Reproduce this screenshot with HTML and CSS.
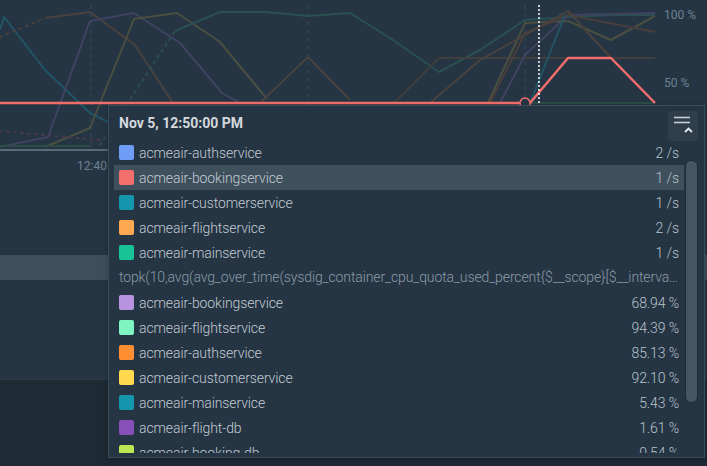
FILE: index.html
```html
<!DOCTYPE html>
<html>
<head>
<meta charset="utf-8">
<link rel="stylesheet" href="styles.css">
</head>
<body>
<div class="page">
  <svg class="chart" width="707" height="152" viewBox="0 0 707 152">
    <g class="grid">
      <line x1="91" y1="5" x2="91" y2="150"/>
      <line x1="308" y1="5" x2="308" y2="150"/>
      <line x1="525" y1="5" x2="525" y2="150"/>
    </g>
    <g class="series" fill="none" stroke-width="2" stroke-linejoin="round">
      <polyline stroke="#1f6678" points="0,30 4,17 45,70 90,113 108,122"/>
      <polyline stroke="#5e4a3c" stroke-dasharray="2 5" stroke-linecap="round" points="0,37 45,18"/>
      <polyline stroke="#5e4a3c" points="45,18 90,12 135,45 173,103"/>
      <polyline stroke="#4f4a72" points="0,147 48,137 90,21 134,13 180,43 222,93 240,103"/>
      <polyline stroke="#5f5d3e" points="45,147 90,128 134,19 177,13 220,42 267,99"/>
      <polyline stroke="#5a4c3f" points="260,103 308,57 350,100"/>
      <polyline stroke="#2e5f58" stroke-dasharray="2 5" stroke-linecap="round" points="100,145 175,31"/>
      <polyline stroke="#2e5f58" points="175,31 220,12 265,12 308,16 350,13 393,40 439,72 480,50 525,20 569,17 611,15 655,15"/>
      <polyline stroke="#5a3c55" stroke-dasharray="2 5" stroke-linecap="round" points="0,131 100,140"/>
      <polyline stroke="#2f5a46" points="0,146 91,146"/>
      <polyline stroke="#4f4538" points="394,103 439,58 655,58"/>
      <polyline stroke="#4f4a72" points="500,103 525,55 568,15 655,13"/>
      <polyline stroke="#5f5d3e" points="488,103 525,23 568,21 611,40 655,16"/>
      <polyline stroke="#5a4438" points="490,103 525,33 568,15 655,32"/>
      <polyline stroke="#1f6678" points="530,103 565,15"/>
      <polyline stroke="#5e4a3c" points="430,103 480,60 568,11 611,58"/>
      <polyline stroke="#2f5a46" points="530,103 655,103"/>
    </g>
    <line class="baseline" x1="0" y1="150" x2="660" y2="150"/>
    <polyline class="red" points="0,103 520,103"/>
    <polyline class="red" points="530,103 568,58 611,58 655,103"/>
    <circle class="marker" cx="525" cy="103" r="5"/>
    <line class="cursor" x1="539" y1="5" x2="539" y2="103"/>
    <text class="ylabel" x="664" y="19">100 %</text>
    <text class="ylabel" x="664" y="87">50 %</text>
  </svg>
  <div class="xaxis"><span class="xlabel">12:40</span></div>
  <div class="spacer"></div>
  <div class="band"></div>
  <div class="lower"></div>
  <div class="footer"></div>

  <div class="tooltip">
    <div class="tt-head">
      <span class="tt-title">Nov 5, 12:50:00 PM</span>
      <button class="tt-btn" type="button">
        <svg width="30" height="30" viewBox="0 0 30 30">
          <line x1="6" y1="6.5" x2="22" y2="6.5" stroke="#c9d1d7" stroke-width="1.6"/>
          <line x1="6" y1="11.5" x2="22" y2="11.5" stroke="#c9d1d7" stroke-width="1.6"/>
          <polyline points="17,21 20.5,17.5 24,21" fill="none" stroke="#e6ebef" stroke-width="1.8"/>
        </svg>
      </button>
    </div>
    <div class="tt-body">
      <div class="tt-list">
        <div class="row"><span class="sw" style="background:#6f9cf5"></span><span class="name">acmeair-authservice</span><span class="val">2 /s</span></div>
        <div class="row hl"><span class="sw" style="background:#f2706c"></span><span class="name">acmeair-bookingservice</span><span class="val">1 /s</span></div>
        <div class="row"><span class="sw" style="background:#1596ad"></span><span class="name">acmeair-customerservice</span><span class="val">1 /s</span></div>
        <div class="row"><span class="sw" style="background:#ffa84f"></span><span class="name">acmeair-flightservice</span><span class="val">2 /s</span></div>
        <div class="row"><span class="sw" style="background:#18c495"></span><span class="name">acmeair-mainservice</span><span class="val">1 /s</span></div>
        <div class="row query">topk(10,avg(avg_over_time(sysdig_container_cpu_quota_used_percent{$__scope}[$__interval])) by (kubernetes_deployment_name))</div>
        <div class="row"><span class="sw" style="background:#b894e0"></span><span class="name">acmeair-bookingservice</span><span class="val">68.94 %</span></div>
        <div class="row"><span class="sw" style="background:#7ef5c0"></span><span class="name">acmeair-flightservice</span><span class="val">94.39 %</span></div>
        <div class="row"><span class="sw" style="background:#ff8e33"></span><span class="name">acmeair-authservice</span><span class="val">85.13 %</span></div>
        <div class="row"><span class="sw" style="background:#ffd84f"></span><span class="name">acmeair-customerservice</span><span class="val">92.10 %</span></div>
        <div class="row"><span class="sw" style="background:#1596ad"></span><span class="name">acmeair-mainservice</span><span class="val">5.43 %</span></div>
        <div class="row"><span class="sw" style="background:#8750b8"></span><span class="name">acmeair-flight-db</span><span class="val">1.61 %</span></div>
        <div class="row"><span class="sw" style="background:#bde653"></span><span class="name">acmeair-booking-db</span><span class="val">0.54 %</span></div>
      </div>
      <div class="scroll-track"><div class="scroll-thumb"></div></div>
    </div>
  </div>
</div>
</body>
</html>
```
FILE: styles.css
```css
html, body {
  margin: 0;
  padding: 0;
  background: #253544;
  font-family: Roboto, "Liberation Sans", sans-serif;
  overflow: hidden;
}
.page {
  position: relative;
  width: 707px;
  height: 466px;
  display: flex;
  flex-direction: column;
}
.chart {
  display: block;
  flex: none;
}
.grid line {
  stroke: #3a4b59;
  stroke-width: 1;
  stroke-dasharray: 4 4;
}
.series {
  opacity: 0.65;
}
.baseline {
  stroke: #6c7c88;
  stroke-width: 1.5;
}
.red {
  fill: none;
  stroke: #f26e6b;
  stroke-width: 2.5;
  stroke-linejoin: round;
}
.marker {
  fill: #253544;
  stroke: #f26e6b;
  stroke-width: 1.5;
}
.cursor {
  stroke: #ffffff;
  stroke-width: 1.5;
  stroke-dasharray: 2 2;
}
.ylabel {
  fill: #6e8292;
  font-size: 12px;
  font-family: Roboto, "Liberation Sans", sans-serif;
}
.xaxis {
  height: 28px;
  flex: none;
  display: flex;
  align-items: center;
  padding-left: 77px;
}
.xlabel {
  color: #6e8292;
  font-size: 12px;
}
.spacer {
  height: 75px;
  flex: none;
}
.band {
  height: 25px;
  flex: none;
  background: #3e4f5c;
}
.lower {
  height: 99px;
  flex: none;
}
.footer {
  flex: 1;
  background: #1e2b35;
  border-top: 1px solid #2c3b47;
}
.tooltip {
  position: absolute;
  left: 108px;
  top: 105px;
  width: 595px;
  height: 351px;
  background: #253544;
  border: 1px solid #3b4c59;
  display: flex;
  flex-direction: column;
  box-shadow: 0 2px 6px rgba(0,0,0,0.25);
}
.tt-head {
  height: 34px;
  flex: none;
  display: flex;
  align-items: flex-start;
  justify-content: space-between;
  padding: 0 6px 0 10px;
}
.tt-title {
  margin-top: 9px;
  color: #d3d9de;
  font-weight: 700;
  font-size: 14px;
  line-height: 17px;
}
.tt-btn {
  margin-top: 5px;
  width: 30px;
  height: 30px;
  padding: 0;
  border: none;
  border-radius: 3px;
  background: #2e3e4b;
  display: block;
}
.tt-btn svg {
  display: block;
}
.tt-body {
  flex: none;
  height: 313px;
  display: flex;
  padding-left: 5px;
  padding-right: 7px;
}
.tt-list {
  width: 570px;
  overflow: hidden;
  flex: none;
}
.row {
  height: 25px;
  display: flex;
  align-items: center;
  padding: 0 5px;
  font-size: 14px;
  font-weight: 300;
  letter-spacing: -0.1px;
  color: #c3cbd2;
}
.row.hl {
  background: #3f505d;
}
.sw {
  width: 15px;
  height: 15px;
  border-radius: 2px;
  flex: none;
  margin-right: 5px;
}
.name {
  flex: 1;
  white-space: nowrap;
}
.val {
  color: #bac3cb;
  white-space: nowrap;
}
.row.query {
  display: block;
  line-height: 25px;
  letter-spacing: -0.12px;
  color: #8c9ba7;
  white-space: nowrap;
  overflow: hidden;
  text-overflow: ellipsis;
}
.scroll-track {
  width: 13px;
  flex: none;
  margin-left: 1px;
  position: relative;
}
.scroll-thumb {
  position: absolute;
  left: 0;
  top: 20px;
  width: 11px;
  height: 241px;
  border-radius: 6px;
  background: #445563;
  border: 1px solid #1f2c36;
}
```
